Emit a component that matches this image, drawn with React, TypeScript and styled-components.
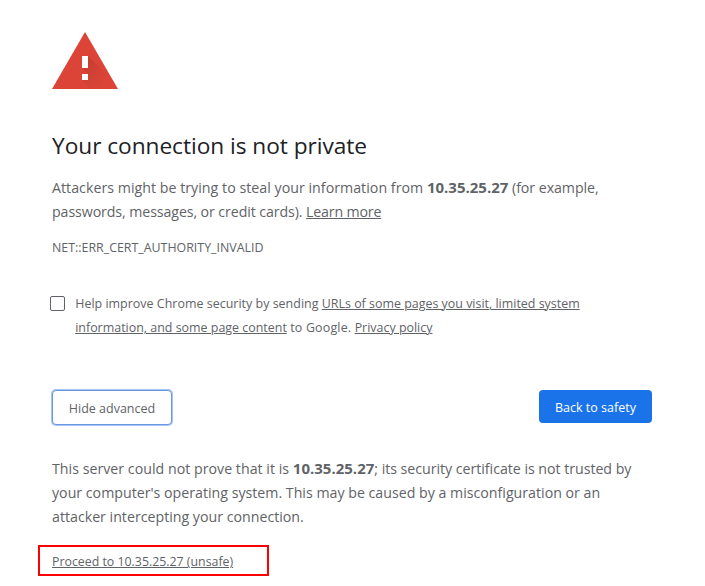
import React from "react";
import styled, { createGlobalStyle } from "styled-components";

const GlobalStyle = createGlobalStyle`
  body {
    margin: 0;
    background: #fff;
    color: #5f6368;
    font-family: "Open Sans", "Noto Sans", sans-serif;
    overflow: hidden;
  }
`;

const Page = styled.main`
  box-sizing: border-box;
  width: 705px;
  height: 586px;
  padding: 32px 53px 0 52px;
  overflow: hidden;
`;

const WarningIcon = styled.svg`
  display: block;
  width: 66px;
  height: 57px;
`;

const Heading = styled.h1`
  margin: 42px 0 15px;
  height: 30px;
  color: #202124;
  font-size: 22.7px;
  font-weight: 400;
  line-height: 30px;
  letter-spacing: -0.04px;
  white-space: nowrap;
`;

const Paragraph = styled.p`
  margin: 0;
  font-size: 14.2px;
  line-height: 24px;
`;

const Line = styled.span<{ $track?: number }>`
  display: block;
  white-space: pre;
  letter-spacing: ${(p) => p.$track ?? 0}px;
`;

const Run = styled.span<{ $track: number }>`
  letter-spacing: ${(p) => p.$track}px;
`;

const Host = styled.strong`
  font-size: 15px;
  font-weight: 700;
  line-height: 0;
`;

const Link = styled.a<{ $track?: number }>`
  color: inherit;
  letter-spacing: ${(p) => p.$track ?? 0}px;
  text-decoration: underline;
  text-decoration-thickness: 1px;
  text-underline-offset: 1px;
  cursor: pointer;
`;

const ErrorCode = styled.div`
  margin-top: 12px;
  font-size: 12.4px;
  line-height: 24px;
`;

const OptIn = styled.label`
  display: flex;
  margin: 32px 0 0 -2px;
  font-size: 12.45px;
  line-height: 24px;
`;

const Checkbox = styled.input`
  appearance: none;
  box-sizing: border-box;
  flex: none;
  width: 15px;
  height: 15px;
  margin: 4px 10.2px 0 0;
  border: 1px solid #5f6368;
  border-radius: 2px;
  background: #fff;
`;

const Actions = styled.div`
  display: flex;
  justify-content: space-between;
  align-items: flex-start;
  margin: 50px 0 0;
  height: 67px;
`;

const Button = styled.button<{ $primary?: boolean }>`
  box-sizing: border-box;
  width: ${(p) => (p.$primary ? 113 : 120)}px;
  height: ${(p) => (p.$primary ? 33 : 35)}px;
  padding: 2px 0 0;
  border: ${(p) => (p.$primary ? "0" : "1px solid #6b95dc")};
  border-radius: 4px;
  box-shadow: ${(p) => (p.$primary ? "none" : "0 0 0 1px #a5c4f8")};
  background: ${(p) => (p.$primary ? "#1a73e8" : "#fff")};
  color: ${(p) => (p.$primary ? "#fff" : "#5f6368")};
  font: 400 12.5px "Open Sans", "Noto Sans", sans-serif;
  line-height: 31px;
  text-align: center;
`;

const ProceedBox = styled.div`
  box-sizing: border-box;
  width: 231px;
  height: 31px;
  margin: 16px 0 0 -14px;
  padding-left: 12px;
  border: 2px solid #f00;
  font-size: 12.35px;
  line-height: 29px;
`;

export default function App() {
  return (
    <>
      <GlobalStyle />
      <Page>
        <WarningIcon viewBox="0 0 66 57" aria-hidden="true">
          <defs>
            <linearGradient id="shade" gradientUnits="userSpaceOnUse" x1="30" y1="24" x2="54" y2="48">
              <stop offset="0" stopColor="#b93a30" stopOpacity="0.75" />
              <stop offset="1" stopColor="#b93a30" stopOpacity="0" />
            </linearGradient>
            <clipPath id="sign">
              <path d="M33 0 66 57H0Z" />
            </clipPath>
          </defs>
          <path d="M33 0 66 57H0Z" fill="#db4437" />
          <path
            d="M36 24 69 57H39L30 48 36 42 30 36Z"
            fill="url(#shade)"
            clipPath="url(#sign)"
          />
          <path d="M30 24h6v12h-6zM30 42h6v6h-6z" fill="#fff" />
        </WarningIcon>

        <Heading>Your connection is not private</Heading>

        <Paragraph>
          <Line>
            <Run $track={0.03}>Attackers might be trying to steal your information from </Run>
            <Host>10.35.25.27</Host>
            <Run $track={-0.05}> (for example,</Run>
          </Line>
          <Line>
            <Run $track={-0.09}>passwords, messages, or credit cards). </Run>
            <Link $track={-0.18}>Learn more</Link>
          </Line>
        </Paragraph>

        <ErrorCode>NET::ERR_CERT_AUTHORITY_INVALID</ErrorCode>

        <OptIn>
          <Checkbox type="checkbox" />
          <span>
            <Line>
              <Run $track={0.02}>Help improve Chrome security by sending </Run>
              <Link>URLs of some pages you visit, limited system</Link>
            </Line>
            <Line>
              <Link>information, and some page content</Link>
              <Run $track={0.17}> to Google. </Run>
              <Link>Privacy policy</Link>
            </Line>
          </span>
        </OptIn>

        <Actions>
          <Button>Hide advanced</Button>
          <Button $primary>Back to safety</Button>
        </Actions>

        <Paragraph>
          <Line>
            <Run $track={0.02}>This server could not prove that it is </Run>
            <Host>10.35.25.27</Host>
            <Run $track={-0.03}>; its security certificate is not trusted by</Run>
          </Line>
          <Line>your computer's operating system. This may be caused by a misconfiguration or an</Line>
          <Line>attacker intercepting your connection.</Line>
        </Paragraph>

        <ProceedBox>
          <Link>Proceed to 10.35.25.27 (unsafe)</Link>
        </ProceedBox>
      </Page>
    </>
  );
}
